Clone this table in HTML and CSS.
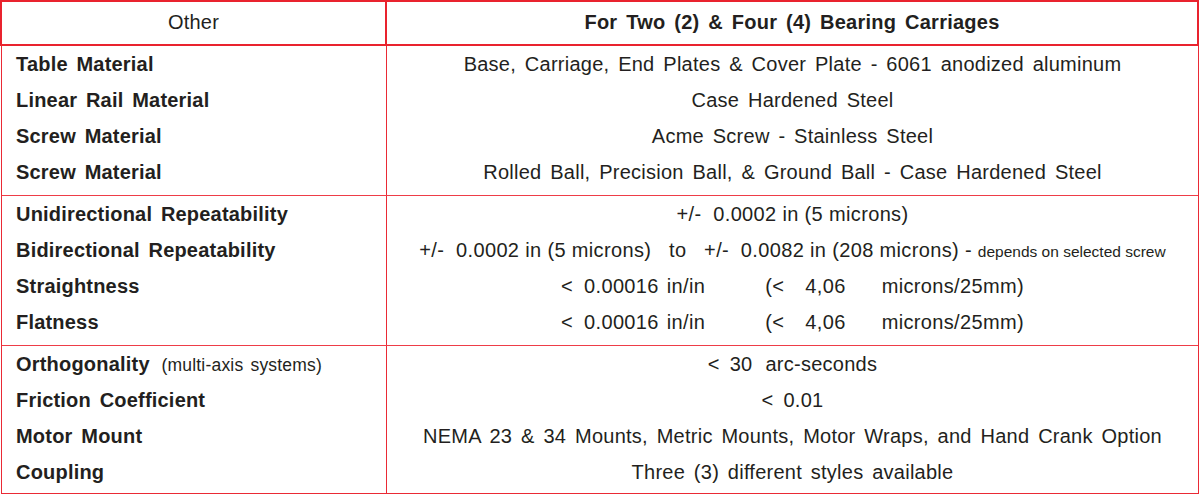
FILE: index.html
```html
<!DOCTYPE html>
<html>
<head>
<meta charset="utf-8">
<link rel="stylesheet" href="styles.css">
</head>
<body>
<div class="sheet">
  <div class="head">
    <div class="hcell first">Other</div>
    <div class="hcell bold">For Two (2) &amp; Four (4) Bearing Carriages</div>
  </div>
  <div class="tbody">
    <div class="section">
      <div class="labels">
        <div class="line">Table Material</div>
        <div class="line">Linear Rail Material</div>
        <div class="line">Screw Material</div>
        <div class="line">Screw Material</div>
      </div>
      <div class="vals">
        <div class="line">Base, Carriage, End Plates &amp; Cover Plate - 6061 anodized aluminum</div>
        <div class="line">Case Hardened Steel</div>
        <div class="line">Acme Screw - Stainless Steel</div>
        <div class="line">Rolled Ball, Precision Ball, &amp; Ground Ball - Case Hardened Steel</div>
      </div>
    </div>
    <div class="section">
      <div class="labels">
        <div class="line">Unidirectional Repeatability</div>
        <div class="line">Bidirectional Repeatability</div>
        <div class="line">Straightness</div>
        <div class="line">Flatness</div>
      </div>
      <div class="vals tight">
        <div class="line pre">+/-  0.0002 in (5 microns)</div>
        <div class="line pre">+/-  0.0002 in (5 microns)   to   +/-  0.0082 in (208 microns) - <span class="small">depends on selected screw</span></div>
        <div class="line"><span>&lt;</span><span class="g1">0.00016</span><span class="g2">in/in</span><span class="g3">(&lt;</span><span class="g4">4,06</span><span class="g5">microns/25mm)</span></div>
        <div class="line"><span>&lt;</span><span class="g1">0.00016</span><span class="g2">in/in</span><span class="g3">(&lt;</span><span class="g4">4,06</span><span class="g5">microns/25mm)</span></div>
      </div>
    </div>
    <div class="section last">
      <div class="labels">
        <div class="line">Orthogonality <span class="note">(multi-axis systems)</span></div>
        <div class="line">Friction Coefficient</div>
        <div class="line">Motor Mount</div>
        <div class="line">Coupling</div>
      </div>
      <div class="vals">
        <div class="line"><span>&lt;</span><span class="s10">30</span><span class="s13">arc-seconds</span></div>
        <div class="line"><span>&lt;</span><span class="s10">0.01</span></div>
        <div class="line">NEMA 23 &amp; 34 Mounts, Metric Mounts, Motor Wraps, and Hand Crank Option</div>
        <div class="line">Three (3) different styles available</div>
      </div>
    </div>
  </div>
</div>
</body>
</html>
```

FILE: styles.css
```css
html, body {
  margin: 0;
  padding: 0;
  background: #ffffff;
}

body {
  font-family: "Liberation Sans", Arial, sans-serif;
  font-size: 20px;
  color: #231f20;
}

.sheet {
  width: 1199px;
}

.head {
  display: grid;
  grid-template-columns: 385px 1fr;
  height: 46px;
  box-sizing: border-box;
  border: 2px solid #e9232e;
}

.hcell {
  line-height: 40px;
  text-align: center;
  letter-spacing: 0.2px;
  word-spacing: 2px;
}

.hcell.first {
  border-right: 2px solid #e9232e;
}

.bold {
  font-weight: bold;
  letter-spacing: 0.25px;
  word-spacing: 3px;
}

.tbody {
  margin-left: 1px;
  border-left: 1px solid #ea2a35;
  border-right: 1px solid #ea2a35;
  border-bottom: 1px solid #ea2a35;
}

.section {
  display: grid;
  grid-template-columns: 385px 1fr;
  border-bottom: 1px solid #ee3d47;
}

.section.last {
  border-bottom: none;
}

.labels {
  box-sizing: border-box;
  border-right: 1px solid #ea2a35;
  padding: 0 0 5px 14px;
  font-weight: bold;
  letter-spacing: 0.2px;
  word-spacing: 3px;
}

.section.last .labels,
.section.last .vals {
  padding-bottom: 3px;
}

.vals {
  padding-bottom: 5px;
  text-align: center;
  letter-spacing: 0.25px;
  word-spacing: 3px;
}

.vals.tight {
  letter-spacing: 0.35px;
  word-spacing: 0;
}

.line {
  height: 36px;
  line-height: 36px;
  white-space: nowrap;
}

.pre {
  white-space: pre;
}

.small {
  font-size: 15.5px;
  letter-spacing: 0;
}

.note {
  font-weight: normal;
  font-size: 17.5px;
  letter-spacing: 0.2px;
  word-spacing: 2px;
  margin-left: 3px;
}

.g1 { margin-left: 11px; }
.g2 { margin-left: 8px; }
.g3 { margin-left: 60px; }
.g4 { margin-left: 21px; }
.g5 { margin-left: 36px; }

.s10 { margin-left: 10px; }
.s13 { margin-left: 13px; }
```
